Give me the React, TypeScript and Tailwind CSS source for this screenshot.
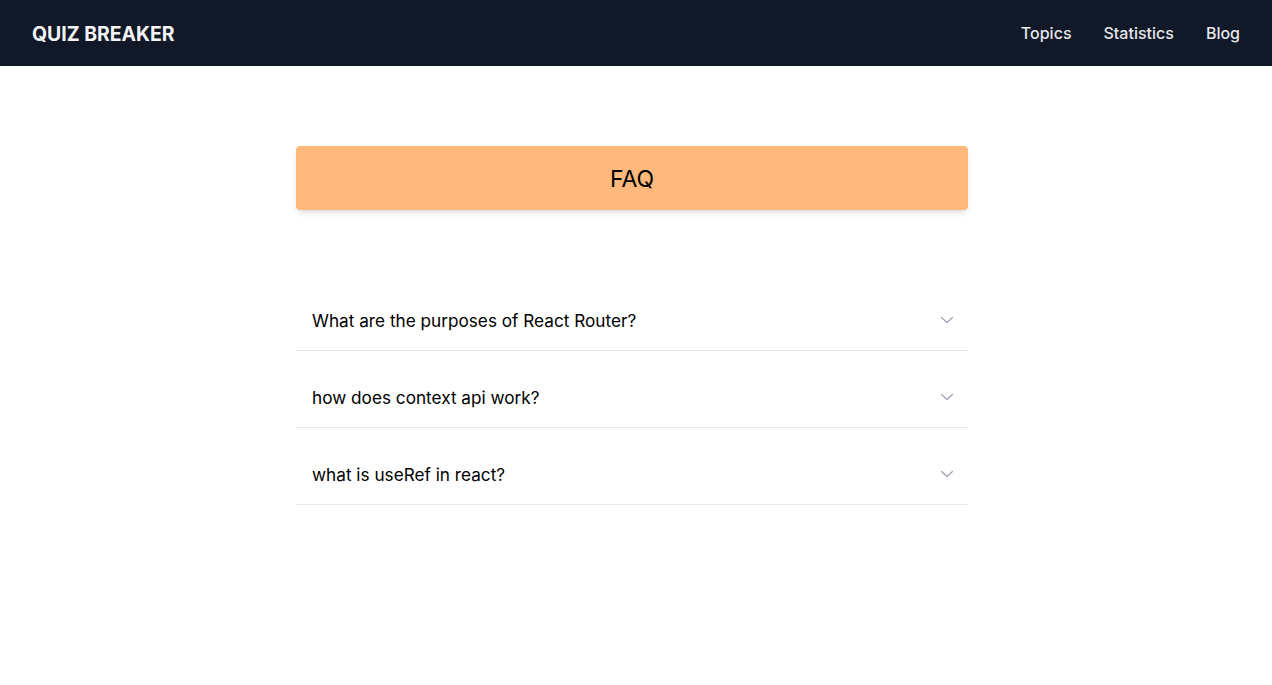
import { useState } from "react"

const questions = [
  {
    q: "What are the purposes of React Router?",
    a: "React Router enables client side routing: it keeps the UI in sync with the URL and renders the matching component without a full page reload.",
  },
  {
    q: "how does context api work?",
    a: "Context provides a way to pass data through the component tree without passing props down manually at every level.",
  },
  {
    q: "what is useRef in react?",
    a: "useRef returns a mutable ref object whose .current property persists for the full lifetime of the component.",
  },
]

function Chevron({ open }: { open: boolean }) {
  return (
    <svg
      width="14"
      height="14"
      viewBox="0 0 14 14"
      fill="none"
      className={open ? "rotate-180 transition-transform" : "transition-transform"}
    >
      <path d="M1.5 4.5L7 9.5L12.5 4.5" stroke="#9ca3af" strokeWidth="1.2" strokeLinecap="round" strokeLinejoin="round" />
    </svg>
  )
}

export default function App() {
  const [open, setOpen] = useState<number | null>(null)

  return (
    <div className="min-h-screen bg-white font-['Inter',sans-serif]">
      {/* Navbar */}
      <nav className="h-[66px] bg-[#111827] flex items-center justify-between px-8">
        <span className="text-[19.4px] font-bold text-[#f3f4f6] pt-[3px]">QUIZ BREAKER</span>
        <div className="flex items-center gap-8 text-[16px] font-medium text-[#e5e7eb]">
          <a href="#">Topics</a>
          <a href="#">Statistics</a>
          <a href="#">Blog</a>
        </div>
      </nav>

      <div className="pr-2">
        <main className="max-w-[672px] mx-auto">
          <div className="mt-20 h-16 rounded bg-[#ffb97c] shadow-md flex items-center justify-center">
            <h1 className="text-[23px] text-black pt-0.5">FAQ</h1>
          </div>

          <div className="mt-16">
            {questions.map((item, i) => (
              <div key={i} className="pt-4 border-b border-[#e5e7eb]">
                <button
                  onClick={() => setOpen(open === i ? null : i)}
                  className="w-full h-[60px] flex items-center justify-between pl-4 pr-[14px] text-left"
                >
                  <span className="text-[17.2px] text-black pt-0.5">{item.q}</span>
                  <Chevron open={open === i} />
                </button>
                {open === i && <p className="px-4 pb-4 text-[15px] text-gray-600">{item.a}</p>}
              </div>
            ))}
          </div>
        </main>
      </div>
    </div>
  )
}
